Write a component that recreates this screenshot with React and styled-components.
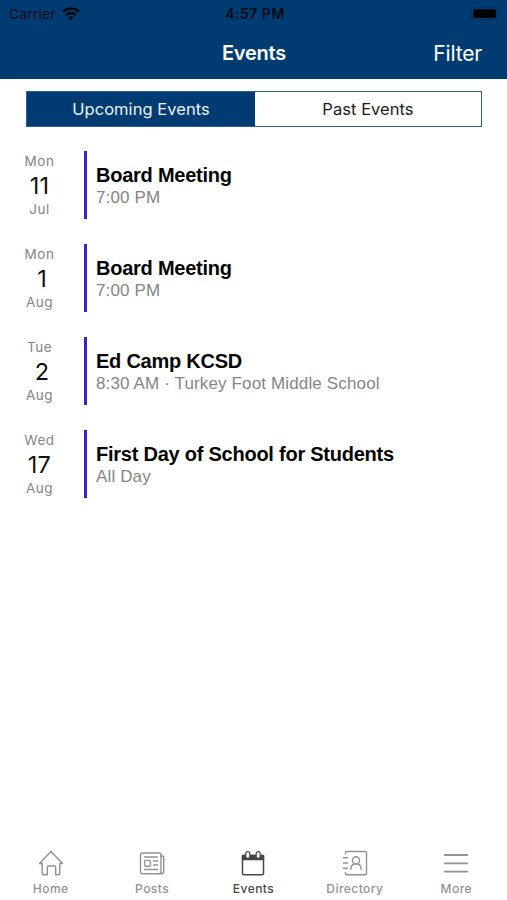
import React, { useState } from 'react';
import styled, { createGlobalStyle } from 'styled-components';

const GlobalStyle = createGlobalStyle`
    * {
        box-sizing: border-box;
    }

    body {
        margin: 0;
        background-color: #ffffff;
        font-family: Inter, "Liberation Sans", sans-serif;
    }
`;

const Screen = styled.div`
    display: flex;
    flex-direction: column;
    width: 507px;
    height: 900px;
    background-color: #ffffff;
    overflow: hidden;
`;

const Header = styled.header`
    height: 79px;
    background-color: #003c71;
`;

const StatusBar = styled.div`
    display: grid;
    grid-template-columns: 1fr auto 1fr;
    align-items: center;
    height: 27px;
    padding: 0 6px 0 9px;
    color: #020b14;
    font-size: 13.5px;
`;

const Carrier = styled.div`
    display: flex;
    align-items: center;
    gap: 6px;
    letter-spacing: 0.35px;
`;

const Clock = styled.span`
    font-weight: 600;
    font-size: 14px;
    letter-spacing: 0.5px;
`;

const Battery = styled.svg`
    justify-self: end;
`;

const NavBar = styled.div`
    display: grid;
    grid-template-columns: 1fr auto 1fr;
    align-items: center;
    height: 52px;
    padding: 0 25px 0 26px;
    color: #ffffff;
`;

const NavTitle = styled.h1`
    grid-column: 2;
    margin: 0;
    font-size: 20px;
    line-height: 52px;
    font-weight: 600;
    letter-spacing: -0.2px;
`;

const FilterButton = styled.button`
    justify-self: end;
    padding: 0;
    border: none;
    background: none;
    color: #ffffff;
    font-family: inherit;
    font-size: 21px;
    letter-spacing: -0.15px;
    cursor: pointer;
`;

const Segments = styled.div`
    display: grid;
    grid-template-columns: 228px 1fr;
    height: 36px;
    margin: 12px 25px 0 26px;
    border: 1px solid #2b5f8d;
`;

const Segment = styled.button`
    padding: 0;
    border: none;
    background-color: ${props => (props.$active ? '#003c71' : '#ffffff')};
    color: ${props => (props.$active ? '#e9f1f8' : '#1c1c1c')};
    font-family: inherit;
    font-size: 16.5px;
    letter-spacing: 0.05px;
    cursor: pointer;
`;

const EventList = styled.ul`
    flex: 1;
    display: flex;
    flex-direction: column;
    gap: 25px;
    margin: 0;
    padding: 24px 0 0;
    list-style: none;
`;

const EventRow = styled.li`
    display: flex;
    height: 68px;
`;

const DateColumn = styled.div`
    display: flex;
    flex-direction: column;
    align-items: center;
    width: 84px;
    padding: 1px 5px 0 0;
`;

const DateLabel = styled.span`
    color: #858585;
    font-size: 13.5px;
    line-height: 18px;
    letter-spacing: 0.5px;
`;

const DayNumber = styled.span`
    margin-bottom: -1px;
    padding: 1px 0 0 ${props => (props.$single ? '5px' : '0')};
    color: #111111;
    font-size: 23.5px;
    line-height: 30px;
    letter-spacing: ${props => (props.$single ? '0' : '0.3px')};
`;

const Stripe = styled.div`
    width: 3px;
    background-color: #3524cd;
`;

const EventInfo = styled.div`
    padding: 12px 0 0 9px;
    font-family: "Liberation Sans", Arial, sans-serif;
`;

const EventTitle = styled.h2`
    margin: 0;
    color: #050505;
    font-size: 20px;
    line-height: 24px;
    font-weight: 700;
    letter-spacing: -0.24px;
`;

const EventTime = styled.p`
    margin: 0;
    color: #858585;
    font-size: 17px;
    line-height: 21px;
    letter-spacing: 0.14px;
`;

const TabBar = styled.nav`
    display: grid;
    grid-template-columns: repeat(5, 1fr);
    height: 52px;
`;

const Tab = styled.button`
    display: flex;
    flex-direction: column;
    align-items: center;
    padding: 0;
    border: none;
    background: none;
    color: ${props => (props.$active ? '#444748' : '#929292')};
    font-family: inherit;
    font-size: 12px;
    line-height: 16px;
    font-weight: 500;
    letter-spacing: 0.45px;
    cursor: pointer;
`;

const TabIcon = styled.svg`
    display: block;
    width: 28px;
    height: 28px;
    margin: 1px 0 4px;
    fill: none;
    stroke: currentColor;
    stroke-width: 1.4;
    stroke-linecap: round;
    stroke-linejoin: round;
`;

const events = [
    { id: 1, weekday: 'Mon', day: 11, month: 'Jul', title: 'Board Meeting', time: '7:00 PM' },
    { id: 2, weekday: 'Mon', day: 1, month: 'Aug', title: 'Board Meeting', time: '7:00 PM' },
    { id: 3, weekday: 'Tue', day: 2, month: 'Aug', title: 'Ed Camp KCSD', time: '8:30 AM · Turkey Foot Middle School' },
    { id: 4, weekday: 'Wed', day: 17, month: 'Aug', title: 'First Day of School for Students', time: 'All Day' },
];

const tabs = [
    {
        name: 'Home',
        icon: <path d="M2.5 14.5 14 2.5l11.5 12h-2.7v9.7c0 1-.6 1.5-1.5 1.5h-2.6V18c0-.7-.4-1-1-1h-6.4c-.6 0-1 .3-1 1v7.7H6.7c-.9 0-1.5-.5-1.5-1.5v-9.7z" />,
    },
    {
        name: 'Posts',
        icon: (
            <>
                <rect x="2.5" y="4" width="20.5" height="20.8" rx="2" />
                <path d="M23 7h1.2c.9 0 1.5.6 1.5 1.5v13.8c0 1.5-1 2.5-2.5 2.5H21" />
                <rect x="6.6" y="11.4" width="5.8" height="5.8" rx="1" />
                <path d="M6.5 8h13M15.5 12h4M15.5 16h4M6.5 20.5h13" />
            </>
        ),
    },
    {
        name: 'Events',
        icon: (
            <>
                <path d="M3.5 6.5h21v4h-21z" fill="currentColor" />
                <rect x="3.5" y="6.5" width="21" height="19.3" rx="1.5" strokeWidth="1.5" />
                <rect x="6.8" y="2.6" width="4" height="6.8" rx="2" fill="#ffffff" strokeWidth="1.2" />
                <rect x="17.2" y="2.6" width="4" height="6.8" rx="2" fill="#ffffff" strokeWidth="1.2" />
            </>
        ),
    },
    {
        name: 'Directory',
        icon: (
            <>
                <path d="M4.5 4.8V4c0-1 .6-1.5 1.5-1.5h18c.9 0 1.5.5 1.5 1.5v20.2c0 1-.6 1.5-1.5 1.5H6c-.9 0-1.5-.5-1.5-1.5v-.8" />
                <path d="M2.5 8.7h4M2.5 14h4M2.5 19.2h4" />
                <circle cx="15" cy="11.4" r="3.6" />
                <path d="M9.8 20.2c.1-3.3 1.8-5.4 5.2-5.4s5.1 2.1 5.2 5.4" />
            </>
        ),
    },
    {
        name: 'More',
        icon: <path d="M2.8 6h22.4M2.8 14.3h22.4M2.8 22.6h22.4" strokeWidth="1.8" />,
    },
];

const WifiIcon = () => (
    <svg width="18" height="14" viewBox="0 0 18 14" fill="none" stroke="currentColor" strokeWidth="2.4">
        <path d="M1 4.7c4.4-4.2 11.6-4.2 16 0" />
        <path d="M4 8c2.8-2.6 7.2-2.6 10 0" />
        <path d="M6.2 10.4c1.6-1.5 4-1.5 5.6 0L9 13.3z" fill="currentColor" stroke="none" />
    </svg>
);

const App = () => {
    const [filter, setFilter] = useState('upcoming');
    const [activeTab, setActiveTab] = useState('Events');

    return (
        <Screen>
            <GlobalStyle />
            <Header>
                <StatusBar>
                    <Carrier>
                        Carrier
                        <WifiIcon />
                    </Carrier>
                    <Clock>4:57 PM</Clock>
                    <Battery width="30" height="14" viewBox="0 0 30 14">
                        <rect x="0.5" y="0.5" width="26" height="12" rx="3" fill="none" stroke="#03335f" />
                        <rect x="2.2" y="2.2" width="22.6" height="8.8" rx="1" fill="#000000" />
                        <path d="M28 4.5c1.6.8 1.6 3.4 0 4.2z" fill="#03335f" />
                    </Battery>
                </StatusBar>
                <NavBar>
                    <NavTitle>Events</NavTitle>
                    <FilterButton>Filter</FilterButton>
                </NavBar>
            </Header>
            <Segments>
                <Segment $active={filter === 'upcoming'} onClick={() => setFilter('upcoming')}>Upcoming Events</Segment>
                <Segment $active={filter === 'past'} onClick={() => setFilter('past')}>Past Events</Segment>
            </Segments>
            <EventList>
                {events.map(event => (
                    <EventRow key={event.id}>
                        <DateColumn>
                            <DateLabel>{event.weekday}</DateLabel>
                            <DayNumber $single={event.day < 10}>{event.day}</DayNumber>
                            <DateLabel>{event.month}</DateLabel>
                        </DateColumn>
                        <Stripe />
                        <EventInfo>
                            <EventTitle>{event.title}</EventTitle>
                            <EventTime>{event.time}</EventTime>
                        </EventInfo>
                    </EventRow>
                ))}
            </EventList>
            <TabBar>
                {tabs.map(tab => (
                    <Tab key={tab.name} $active={activeTab === tab.name} onClick={() => setActiveTab(tab.name)}>
                        <TabIcon viewBox="0 0 28 28">{tab.icon}</TabIcon>
                        {tab.name}
                    </Tab>
                ))}
            </TabBar>
        </Screen>
    );
};

export default App;
